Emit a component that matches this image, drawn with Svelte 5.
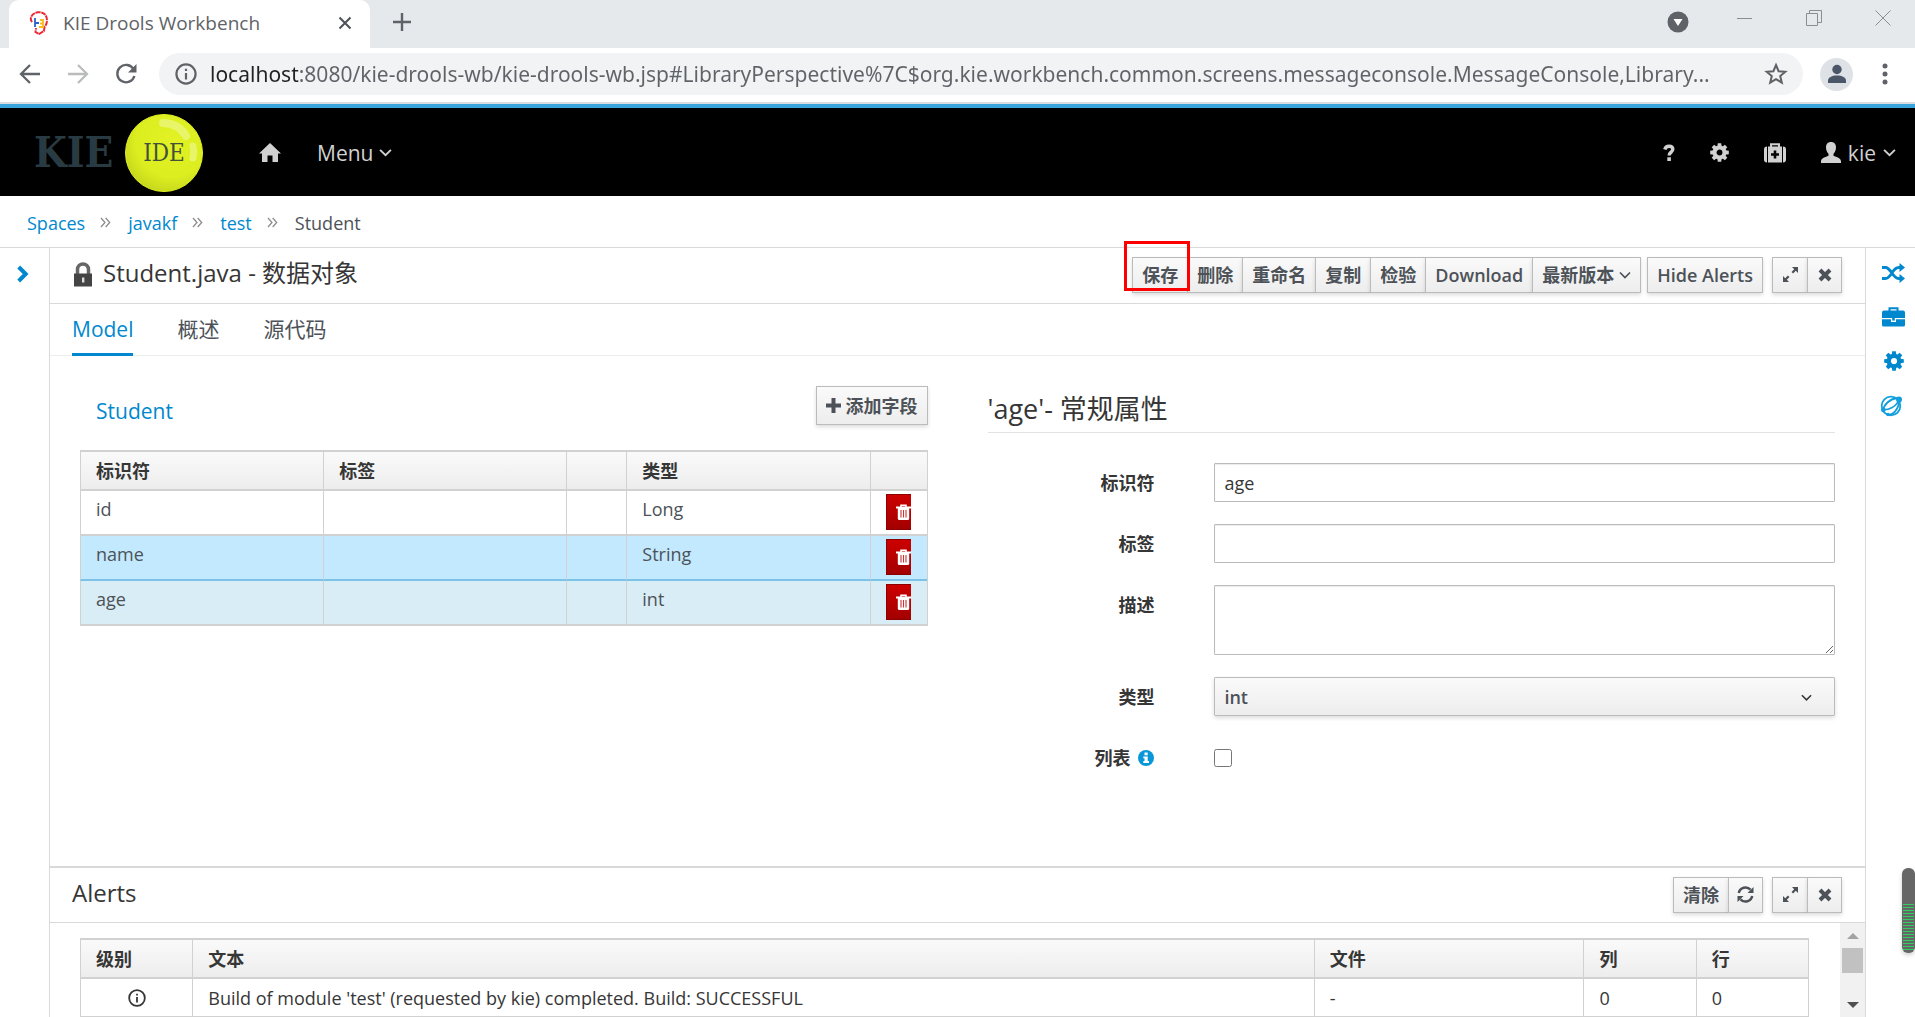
<script>
  const crumbs = ['Spaces', 'javakf', 'test'];
  const fields = [
    { name: 'id', type: 'Long', state: '' },
    { name: 'name', type: 'String', state: 'hovered' },
    { name: 'age', type: 'int', state: 'selected' }
  ];
  const actions = ['删除', '重命名', '复制', '检验', 'Download'];
  const teeth = [0, 45, 90, 135, 180, 225, 270, 315];
  let url = $state(
    'localhost:8080/kie-drools-wb/kie-drools-wb.jsp#LibraryPerspective%7C$org.kie.workbench.common.screens.messageconsole.MessageConsole,Library...'
  );
  let identifier = $state('age');
  let label = $state('');
  let description = $state('');
  let type = $state('int');
  let isList = $state(false);
</script>

{#snippet gear(size)}
  <svg width={size} height={size} viewBox="0 0 20 20" aria-hidden="true">
    {#each teeth as angle}
      <path d="M7.7 4 L8.2 .2 H11.8 L12.3 4Z" transform="rotate({angle} 10 10)" fill="currentColor" />
    {/each}
    <circle cx="10" cy="10" r="5.2" fill="none" stroke="currentColor" stroke-width="4.2" />
  </svg>
{/snippet}

{#snippet chevron(size)}
  <svg width={size} height={size} viewBox="0 0 12 12" aria-hidden="true">
    <path d="M1 3.5 6 8.5 11 3.5" fill="none" stroke="currentColor" stroke-width="1.7" />
  </svg>
{/snippet}

{#snippet cross()}
  <svg width="14" height="14" viewBox="0 0 14 14" aria-hidden="true">
    <path d="M2 2 12 12M12 2 2 12" stroke="currentColor" stroke-width="4" />
  </svg>
{/snippet}

{#snippet expand()}
  <svg width="17" height="17" viewBox="0 0 17 17" aria-hidden="true">
    <path d="M10 1h6v6l-2.2-2.2-2.7 2.7-1.6-1.6 2.7-2.7zM1 10l2.2 2.2 2.7-2.7 1.6 1.6-2.7 2.7L7 16H1z" fill="currentColor" />
  </svg>
{/snippet}

{#snippet infoRing(size)}
  <svg width={size} height={size} viewBox="0 0 20 20" aria-hidden="true">
    <circle cx="10" cy="10" r="8.7" fill="none" stroke="currentColor" stroke-width="2" />
    <path d="M9 9h2v6H9zM9 5.2h2v2.1H9z" fill="currentColor" />
  </svg>
{/snippet}

<div class="window">
  <div class="tabstrip">
    <div class="tab">
      <svg class="favicon" width="20" height="24" viewBox="0 0 20 24" aria-hidden="true">
        <path d="M3 11C0 7 3 2 9 1.3c6-.6 9 3 9 8 0 3-1 5-2.500 6.700L15 20l-5 3-3.500-2L7 17" fill="#fff" stroke="#ee2737" stroke-width="2" stroke-dasharray="5 .7" />
        <path d="M6 7v9M6 12h4" stroke="#2d62c8" stroke-width="1.800" fill="none" />
        <path d="M11 9h3v7h-4M11 12.500h3" stroke="#f9bd19" stroke-width="1.800" fill="none" />
      </svg>
      <span class="tabtitle">KIE Drools Workbench</span>
      <button class="plain" aria-label="Close tab">
        <svg width="14" height="14" viewBox="0 0 14 14"><path d="M1.500 1.500 12.500 12.500M12.500 1.500 1.500 12.500" stroke="#4d5156" stroke-width="2" /></svg>
      </button>
    </div>
    <button class="plain newtab" aria-label="New tab">
      <svg width="18" height="18" viewBox="0 0 18 18"><path d="M9 0V18M0 9H18" stroke="#5f6368" stroke-width="2.400" /></svg>
    </button>
    <div class="wincontrols">
      <button class="plain" aria-label="Search tabs">
        <svg width="22" height="22" viewBox="0 0 22 22"><circle cx="11" cy="11" r="10.500" fill="#5f6368" /><path d="M6.500 8h9L11 15z" fill="#fff" /></svg>
      </button>
      <button class="plain winbtn" aria-label="Minimize"><svg width="16" height="16" viewBox="0 0 16 16"><path d="M0 8.500H15" stroke="#8b8e91" /></svg></button>
      <button class="plain winbtn" aria-label="Restore"><svg width="16" height="16" viewBox="0 0 16 16"><path d="M.5 3.500h11v12H.5zM3.500 3.500V.5h12v12h-4" fill="none" stroke="#8b8e91" /></svg></button>
      <button class="plain winbtn" aria-label="Close"><svg width="16" height="16" viewBox="0 0 16 16"><path d="M.5.5l15 15M15.500.5l-15 15" stroke="#8b8e91" /></svg></button>
    </div>
  </div>

  <div class="toolbar">
    <button class="plain" aria-label="Back"><svg width="22" height="22" viewBox="0 0 22 22"><path d="M21 11H2.500M11 2 2 11l9 9" fill="none" stroke="#5f6368" stroke-width="2.300" /></svg></button>
    <button class="plain" aria-label="Forward"><svg width="22" height="22" viewBox="0 0 22 22"><path d="M1 11h18.500M11 2l9 9-9 9" fill="none" stroke="#babcbe" stroke-width="2.300" /></svg></button>
    <button class="plain" aria-label="Reload"><svg width="22" height="22" viewBox="0 0 22 22"><path d="M18.700 6.500A8.700 8.700 0 1 0 19.400 13" fill="none" stroke="#5f6368" stroke-width="2.400" /><path d="M21.500 1v8.500H13z" fill="#5f6368" /></svg></button>
    <div class="omnibox">
      {@render infoRing(22)}
      <input class="url" aria-label="Address" bind:value={url} />
      <button class="plain" aria-label="Bookmark">
        <svg width="24" height="24" viewBox="0 0 24 24"><path d="M12 3l2.600 6.200 6.700.5-5.100 4.400 1.600 6.500L12 17.100l-5.800 3.500 1.600-6.500-5.100-4.400 6.700-.5z" fill="none" stroke="#5f6368" stroke-width="2" /></svg>
      </button>
    </div>
    <button class="plain avatar" aria-label="Profile">
      <svg width="20" height="20" viewBox="0 0 20 20"><circle cx="10" cy="5.500" r="4.700" fill="#4b5769" /><path d="M1 19v-2.500c0-3 4-5 9-5s9 2 9 5V19z" fill="#4b5769" /></svg>
    </button>
    <button class="plain more" aria-label="Browser menu">
      <svg width="6" height="22" viewBox="0 0 6 22"><g fill="#5f6368"><circle cx="3" cy="3" r="2.500" /><circle cx="3" cy="11" r="2.500" /><circle cx="3" cy="19" r="2.500" /></g></svg>
    </button>
  </div>

  <header class="masthead">
    <a class="logo" href="#home" aria-label="KIE IDE">
      <span class="kie">KIE</span>
      <span class="ball">
        <svg width="80" height="80" viewBox="0 0 80 80" aria-hidden="true">
          <defs>
            <radialGradient id="shine" cx=".6" cy=".35" r=".72">
              <stop offset="0" stop-color="#e2f224" /><stop offset=".65" stop-color="#dcee20" /><stop offset="1" stop-color="#c2d21c" />
            </radialGradient>
          </defs>
          <circle cx="40" cy="40" r="38.500" fill="url(#shine)" stroke="#dff020" />
          <path d="M39 10c10 0 19 5 23 13" fill="none" stroke="#e9f569" stroke-width="8" stroke-linecap="round" />
          <path d="M69 33c1 4 1 8 0 12" fill="none" stroke="#e9f569" stroke-width="7" stroke-linecap="round" />
        </svg>
        <span class="ide">IDE</span>
      </span>
    </a>
    <a class="home" href="#home" aria-label="Home">
      <svg width="22" height="20" viewBox="0 0 22 20"><path d="M11 0 22 10.500h-3V19h-5.500v-6.500h-5V19H3v-8.500H0z" fill="currentColor" /></svg>
    </a>
    <button class="plain menu">Menu {@render chevron(13)}</button>
    <nav class="utilities">
      <button class="plain" aria-label="Help"><svg width="12" height="18" viewBox="0 0 12 18"><path d="M1.800 5.500C2.500 3 4 2.300 6 2.300s3.800 1 3.800 3C9.800 8.300 6.200 8 6.200 11.500" fill="none" stroke="currentColor" stroke-width="3.400" /><path d="M4.300 13.300h3.600v3.700H4.300z" fill="currentColor" /></svg></button>
      <button class="plain" aria-label="Settings">{@render gear(19)}</button>
      <button class="plain" aria-label="Tools">
        <svg width="22" height="20" viewBox="0 0 22 20"><path d="M7 4V1.200h8V4" fill="none" stroke="currentColor" stroke-width="2" /><path d="M3 3.500v16q-3 0-3-3v-10q0-3 3-3zM19 3.500v16q3 0 3-3v-10q0-3-3-3zM4 3.500h14v16H4z" fill="currentColor" /><path d="M11 7.500v8M7 11.500h8" stroke="#000" stroke-width="2.600" /></svg>
      </button>
      <button class="plain user">
        <svg width="20" height="21" viewBox="0 0 20 21" aria-hidden="true"><path d="M10 0c3.300 0 5 2.200 5 5.500 0 3-1.300 5-2.500 6.200v2c3 1.300 7.500 2.300 7.500 5.800V21H0v-1.500c0-3.500 4.500-4.500 7.500-5.800v-2C6.300 10.500 5 8.500 5 5.500 5 2.200 6.700 0 10 0z" fill="currentColor" /></svg>
        <span>kie</span>{@render chevron(13)}
      </button>
    </nav>
  </header>

  <nav class="breadcrumb" aria-label="Breadcrumb">
    {#each crumbs as crumb}
      <a href="#{crumb}">{crumb}</a>
      <svg width="11" height="11" viewBox="0 0 11 11" aria-hidden="true"><path d="M1 1l4 4.500-4 4.500M5.700 1l4 4.500-4 4.500" fill="none" stroke="#8b8d8f" stroke-width="1.300" /></svg>
    {/each}
    <span>Student</span>
  </nav>

  <div class="workspace">
    <aside class="rail">
      <button class="plain" aria-label="Expand project explorer"><svg width="12" height="18" viewBox="0 0 12 18"><path d="M1.700 2 8.700 9l-7 7" fill="none" stroke="currentColor" stroke-width="4" /></svg></button>
    </aside>

    <main class="center">
      <section class="editor">
        <div class="panelhead">
          <svg width="20" height="25" viewBox="0 0 20 25" aria-hidden="true"><path d="M4.500 12V7.500a5.500 5.500 0 0 1 11 0V12" fill="none" stroke="#666" stroke-width="3.500" /><rect x="1" y="11.500" width="18" height="13" fill="#444" /><path d="M9 15.500h2.400v5H9z" fill="#ddd" /></svg>
          <h1>Student.java - 数据对象</h1>
          <div class="buttons">
            <div class="group">
              <span class="marked"><button class="btn">保存</button></span>
              {#each actions as action}
                <button class="btn">{action}</button>
              {/each}
              <button class="btn">最新版本{@render chevron(12)}</button>
            </div>
            <button class="btn alone">Hide Alerts</button>
            <div class="group">
              <button class="btn icon" aria-label="Maximize">{@render expand()}</button>
              <button class="btn icon" aria-label="Close editor">{@render cross()}</button>
            </div>
          </div>
        </div>

        <div class="tabs" role="tablist">
          <button class="plain active" role="tab" aria-selected="true">Model</button>
          <button class="plain" role="tab" aria-selected="false">概述</button>
          <button class="plain" role="tab" aria-selected="false">源代码</button>
        </div>

        <div class="model">
          <div class="fields">
            <div class="fieldhead">
              <a href="#Student">Student</a>
              <button class="btn add">
                <svg width="15" height="15" viewBox="0 0 15 15" aria-hidden="true"><path d="M7.500 0v15M0 7.500h15" stroke="currentColor" stroke-width="4" /></svg>添加字段
              </button>
            </div>
            <table class="grid fieldtable">
              <colgroup><col /><col /><col class="narrow" /><col /><col class="last" /></colgroup>
              <thead><tr><th>标识符</th><th>标签</th><th></th><th>类型</th><th></th></tr></thead>
              <tbody>
                {#each fields as field}
                  <tr class={field.state}>
                    <td>{field.name}</td><td></td><td></td><td>{field.type}</td>
                    <td class="remove">
                      <div class="clip">
                        <button class="danger" aria-label="Delete {field.name}">
                          <svg width="15" height="16" viewBox="0 0 15 16"><path d="M5 3V1.200h5V3" fill="none" stroke="#fff" stroke-width="1.600" /><path d="M0 2.500h15v2H0z" fill="#fff" /><path d="M1.800 4h11.400v10.500q0 1.500-1.500 1.500H3.300q-1.500 0-1.500-1.500z" fill="#fff" /><path d="M5 6v7.500M7.500 6v7.500M10 6v7.500" stroke="#c33" stroke-width="1.100" /></svg>
                        </button>
                      </div>
                    </td>
                  </tr>
                {/each}
              </tbody>
            </table>
          </div>

          <form class="properties">
            <h2>'age'- 常规属性</h2>
            <div class="formgrid">
              <label for="f-id">标识符</label>
              <input id="f-id" type="text" bind:value={identifier} />
              <label for="f-label">标签</label>
              <input id="f-label" type="text" bind:value={label} />
              <label for="f-desc">描述</label>
              <textarea id="f-desc" bind:value={description}></textarea>
              <label for="f-type">类型</label>
              <div class="selectwrap">
                <select id="f-type" bind:value={type}>
                  <option>int</option><option>Long</option><option>String</option>
                </select>
                <span class="caret">{@render chevron(11)}</span>
              </div>
              <label for="f-list" class="withinfo">列表
                <svg width="16" height="16" viewBox="0 0 16 16" aria-hidden="true"><circle cx="8" cy="8" r="8" fill="#0a97da" /><path d="M6.500 2.500h3.200v2.700H6.500zM5.300 6.500h4.400v4.600h1.300V13H5.300v-1.900h1.200V8.300H5.300z" fill="#fff" /></svg>
              </label>
              <input id="f-list" type="checkbox" bind:checked={isList} />
            </div>
          </form>
        </div>
      </section>

      <section class="alerts">
        <div class="panelhead">
          <h1>Alerts</h1>
          <div class="buttons">
            <div class="group">
              <button class="btn">清除</button>
              <button class="btn icon" aria-label="Refresh">
                <svg width="17" height="17" viewBox="0 0 17 17"><path d="M1.800 7A6.800 6.800 0 0 1 13.500 3.700M15.200 10A6.800 6.800 0 0 1 3.500 13.300" fill="none" stroke="currentColor" stroke-width="2.500" /><path d="M16.500 1v6h-6zM.5 16v-6h6z" fill="currentColor" /></svg>
              </button>
            </div>
            <div class="group">
              <button class="btn icon" aria-label="Maximize">{@render expand()}</button>
              <button class="btn icon" aria-label="Close alerts">{@render cross()}</button>
            </div>
          </div>
        </div>
        <div class="alertbody">
          <div class="alertlist">
            <table class="grid alerttable">
              <colgroup><col class="level" /><col /><col class="file" /><col class="level" /><col class="level" /></colgroup>
              <thead><tr><th>级别</th><th>文本</th><th>文件</th><th>列</th><th>行</th></tr></thead>
              <tbody>
                <tr>
                  <td class="mid">{@render infoRing(18)}</td>
                  <td>Build of module 'test' (requested by kie) completed. Build: SUCCESSFUL</td>
                  <td>-</td><td>0</td><td>0</td>
                </tr>
              </tbody>
            </table>
          </div>
          <div class="scrollbar" aria-hidden="true">
            <svg width="12" height="6" viewBox="0 0 12 6"><path d="M0 6 6 0l6 6z" fill="#a3a3a3" /></svg>
            <span class="thumb"></span>
            <svg class="down" width="12" height="6" viewBox="0 0 12 6"><path d="M0 0l6 6 6-6z" fill="#505050" /></svg>
          </div>
        </div>
      </section>
    </main>

    <aside class="rail tools">
      <button class="plain" aria-label="Shuffle">
        <svg width="23" height="20" viewBox="0 0 23 20"><path d="M0 4.500h3.500c5.500 0 7 11 13 11h2M0 15.500h3.500c5.500 0 7-11 13-11h2" fill="none" stroke="currentColor" stroke-width="2.800" /><path d="M17.500 0 23 4.500 17.500 9zM17.500 11l5.500 4.500-5.500 4.500z" fill="currentColor" /></svg>
      </button>
      <button class="plain" aria-label="Toolbox">
        <svg width="23" height="20" viewBox="0 0 23 20"><path d="M7.500 4V1.200h8V4" fill="none" stroke="currentColor" stroke-width="2" /><path d="M2 3.500h19q2 0 2 2V11H0V5.500q0-2 2-2zM0 12.200h9V15h5v-2.800h9V18q0 1.500-1.500 1.500h-20Q0 19.500 0 18z" fill="currentColor" /><path d="M10.200 11h2.600v2.600h-2.600z" fill="currentColor" /></svg>
      </button>
      <button class="plain" aria-label="Preferences">{@render gear(20)}</button>
      <button class="plain globe" aria-label="Services">
        <svg width="22" height="22" viewBox="0 0 22 22"><g fill="none" stroke="#119fdc"><circle cx="11" cy="11" r="9.300" stroke-width="1.800" /><path d="M2.500 14.500C8 15.500 16 12 19 5M3.500 15c0-5 6-11 13.500-12M7 20c6 .5 11-5 12.500-14" stroke-width="1.800" /></g><circle cx="19" cy="4.500" r="3" fill="#119fdc" /><circle cx="3.300" cy="15" r="2.300" fill="#119fdc" /><circle cx="8" cy="19.500" r="1.800" fill="#119fdc" /></svg>
      </button>
    </aside>
  </div>
  <div class="meter" aria-hidden="true"><span></span></div>
</div>

<style>
  :global(body) {
    margin: 0;
    background: #fff;
  }
  .window {
    position: relative;
    display: flex;
    flex-direction: column;
    min-height: 100vh;
    overflow: hidden;
    color: #363636;
    font: 18px/24px "Open Sans", "Noto Sans CJK SC", sans-serif;
  }
  .window :is(*, *::before) {
    box-sizing: border-box;
  }
  svg {
    display: block;
    flex: none;
  }
  a {
    color: #0088ce;
    text-decoration: none;
  }
  button,
  input,
  select,
  textarea {
    margin: 0;
    font: inherit;
    color: inherit;
  }
  .plain {
    padding: 0;
    border: 0;
    background: none;
  }
  h1,
  h2 {
    margin: 0;
    font-weight: 400;
  }

  /* Browser chrome */
  .tabstrip {
    display: flex;
    align-items: center;
    height: 48px;
    padding: 0 24px 4px 9px;
    background: #e5e9ec;
  }
  .tab {
    display: flex;
    align-items: center;
    align-self: flex-start;
    width: 361px;
    height: 48px;
    padding: 0 18px 3px 20px;
    border-radius: 10px 10px 0 0;
    background: #fff;
  }
  .tabtitle {
    flex: 1;
    padding-left: 14px;
    color: #5f6368;
    font-size: 19px;
  }
  .newtab {
    margin-left: 23px;
  }
  .wincontrols {
    display: flex;
    align-items: center;
    gap: 53px;
    margin-left: auto;
  }
  .winbtn {
    padding-bottom: 8px;
  }
  .wincontrols .plain:first-child {
    margin-right: -5px;
  }
  .toolbar {
    display: flex;
    align-items: center;
    gap: 26px;
    height: 56px;
    padding: 0 27px 2px 19px;
    border-bottom: 2px solid #dadce0;
  }
  .omnibox {
    display: flex;
    flex: 1;
    align-items: center;
    gap: 13px;
    height: 42px;
    margin: 0 -9px 0 -4px;
    padding: 0 15px 0 16px;
    border-radius: 21px;
    background: #f1f3f4;
    color: #5f6368;
  }
  .url {
    flex: 1;
    min-width: 0;
    padding: 0;
    border: 0;
    outline: 0;
    background: linear-gradient(90deg, #202124 88px, #5f6368 88px);
    background-clip: text;
    -webkit-background-clip: text;
    color: transparent;
    font-family: "Noto Sans", "Open Sans", sans-serif;
    font-size: 21px;
    line-height: 32px;
  }
  .avatar {
    display: grid;
    place-items: center;
    width: 33px;
    height: 33px;
    margin-right: 3px;
    border-radius: 50%;
    background: #dee1e6;
  }

  /* Masthead */
  .masthead {
    display: flex;
    align-items: center;
    height: 92px;
    padding: 1px 19px 0 34px;
    border-top: 4px solid #39a5dc;
    background: #000;
    color: #d1d1d1;
    font-size: 21px;
  }
  .logo {
    display: flex;
    align-items: center;
    gap: 9px;
    font-family: "DejaVu Serif Condensed", "DejaVu Serif", serif;
  }
  .kie {
    width: 81px;
    color: #293b42;
    font-size: 42px;
    font-weight: 700;
    line-height: 48px;
  }
  .ball {
    display: grid;
    place-items: center;
  }
  .ball > * {
    grid-area: 1 / 1;
  }
  .ide {
    color: #43503a;
    font-size: 24px;
  }
  .home {
    margin: 0 36px 0 55px;
    color: inherit;
  }
  .menu {
    display: flex;
    align-items: center;
    gap: 6px;
  }
  .utilities {
    display: flex;
    align-items: center;
    gap: 35px;
    margin-left: auto;
  }
  .user {
    display: flex;
    align-items: center;
    gap: 7px;
  }
  .breadcrumb {
    display: flex;
    align-items: center;
    height: 52px;
    padding: 2px 27px 0;
    border-bottom: 1px solid #d9d9d9;
  }
  .breadcrumb svg {
    margin: 0 17px 0 15px;
  }
  .breadcrumb span {
    color: #4d5258;
  }

  /* Workspace */
  .workspace {
    display: flex;
    flex: 1;
  }
  .rail {
    flex: none;
    width: 50px;
    padding: 16px 17px;
    border-right: 1px solid #d9d9d9;
    color: #0088ce;
  }
  .rail.tools {
    display: flex;
    flex-direction: column;
    align-items: center;
    gap: 24px;
    padding: 15px 0 0 6px;
    border: 0;
    border-left: 1px solid #d9d9d9;
  }
  .globe {
    padding-right: 6px;
  }
  .center {
    display: flex;
    flex: 1;
    flex-direction: column;
    min-width: 0;
  }
  .editor {
    flex: 1;
  }
  .panelhead {
    display: flex;
    align-items: center;
    height: 56px;
    padding: 0 23px 2px 22px;
    border-bottom: 1px solid #d9d9d9;
  }
  .panelhead h1 {
    padding: 0 0 3px 9px;
    font-size: 24px;
    line-height: 32px;
  }
  .panelhead > svg {
    margin: 0 1px;
  }
  .buttons {
    display: flex;
    gap: 9px;
    margin-left: auto;
  }
  .group {
    display: flex;
  }
  .group .btn:not(:last-child),
  .marked .btn {
    border-right-width: 0;
  }
  .alone {
    margin-left: -3px;
  }
  .btn {
    display: flex;
    align-items: center;
    justify-content: center;
    gap: 5px;
    height: 36px;
    padding: 0 9px;
    border: 1px solid #bbb;
    background: linear-gradient(#fafafa, #ededed);
    box-shadow: 0 2px 4px rgb(3 3 3 / 14%);
    color: #4d5258;
    font-weight: 600;
    white-space: nowrap;
  }
  .icon {
    width: 35px;
    padding: 0;
  }
  .marked {
    position: relative;
  }
  .marked::before {
    content: "";
    position: absolute;
    z-index: 1;
    inset: -16px -3px 2px -8px;
    border: 3px solid #f00;
    pointer-events: none;
  }
  .tabs {
    display: flex;
    gap: 44px;
    height: 52px;
    padding: 0 22px;
    border-bottom: 1px solid #ededed;
  }
  .tabs button {
    height: 52px;
    padding-bottom: 3px;
    color: #4d5258;
    font-size: 21px;
  }
  .tabs .active {
    padding-bottom: 0;
    border-bottom: 3px solid #0088ce;
    color: #0088ce;
  }
  .model {
    display: grid;
    grid-template-columns: 1fr 1fr;
    gap: 60px;
    padding: 30px 30px 60px;
  }
  .fieldhead {
    display: flex;
    align-items: center;
    justify-content: space-between;
    margin-bottom: 25px;
    padding-left: 16px;
    font-size: 21px;
  }
  .fieldhead a {
    padding-top: 10px;
  }
  .add {
    height: 39px;
    font-size: 18px;
  }
  .grid {
    width: 100%;
    table-layout: fixed;
    border-spacing: 0;
    border-top: 2px solid #d1d1d1;
    border-right: 1px solid #d1d1d1;
  }
  .grid th,
  .grid td {
    padding: 0 15px;
    border-bottom: 2px solid #d1d1d1;
    border-left: 1px solid #d1d1d1;
    text-align: left;
    white-space: nowrap;
  }
  .grid th {
    height: 39px;
    background: linear-gradient(#fafafa, #ededed);
    font-weight: 700;
  }
  .narrow {
    width: 60px;
  }
  .last {
    width: 57px;
  }
  .fieldtable td {
    height: 45px;
    padding-bottom: 8px;
    color: #4d5258;
  }
  .fieldtable .remove {
    padding: 0 15px 2px;
  }
  .hovered td {
    border-bottom-color: #7cc1e6;
    background: #c3e9ff;
  }
  .selected td {
    background: #d9edf6;
  }
  .clip {
    width: 25px;
    height: 36px;
    overflow: hidden;
  }
  .danger {
    display: grid;
    place-items: center;
    width: 36px;
    height: 36px;
    padding: 0;
    border: 1px solid #8b0000;
    background: linear-gradient(#c00, #a30000);
  }
  .properties h2 {
    padding: 5px 0;
    border-bottom: 1px solid #e3e3e3;
    font-size: 27px;
    line-height: 36px;
  }
  .formgrid {
    display: grid;
    grid-template-columns: 167fr 621fr;
    gap: 22px 60px;
    padding-top: 30px;
  }
  .formgrid label {
    padding-top: 8px;
    font-weight: 700;
    text-align: right;
  }
  .formgrid input[type="text"],
  .formgrid textarea,
  .formgrid select {
    width: 100%;
    height: 39px;
    padding: 0 9px;
    border: 1px solid #bbb;
    border-radius: 1px;
    outline: 0;
    background: #fff;
    box-shadow: inset 0 1px 1px rgb(3 3 3 / 8%);
  }
  .formgrid textarea {
    display: block;
    height: 70px;
  }
  .formgrid select {
    appearance: none;
    background: linear-gradient(#fafafa, #ededed);
    box-shadow: 0 2px 4px rgb(3 3 3 / 14%);
    color: #4d5258;
    font-weight: 600;
  }
  .selectwrap {
    position: relative;
  }
  .caret {
    position: absolute;
    top: 15px;
    right: 23px;
    pointer-events: none;
  }
  .formgrid .withinfo {
    display: flex;
    align-items: center;
    justify-content: flex-end;
    gap: 8px;
  }
  .formgrid input[type="checkbox"] {
    width: 18px;
    height: 18px;
    margin-top: 11px;
  }

  /* Alerts */
  .alerts {
    border-top: 2px solid #d9d9d9;
  }
  .alerts .panelhead {
    height: 55px;
    padding-left: 13px;
    padding-bottom: 1px;
  }
  .alertbody {
    display: flex;
  }
  .alertlist {
    flex: 1;
    min-width: 0;
    padding: 15px 31px 0 30px;
  }
  .level {
    width: 6.5%;
  }
  .file {
    width: 15.6%;
  }
  .alerttable td {
    height: 38px;
    border-bottom-width: 1px;
  }
  .alerttable .mid svg {
    margin: 0 auto;
  }
  .scrollbar {
    display: flex;
    flex-direction: column;
    align-items: center;
    width: 25px;
    padding: 10px 0 9px;
    background: #f1f1f1;
  }
  .thumb {
    width: 21px;
    height: 25px;
    margin-top: 9px;
    background: #c1c1c1;
  }
  .down {
    margin-top: auto;
  }
  .meter {
    position: absolute;
    right: 0;
    bottom: 64px;
    width: 13px;
    height: 85px;
    padding: 36px 1px 3px;
    border-radius: 6px;
    background: #666;
    box-shadow: 0 2px 4px rgb(0 0 0 / 20%);
  }
  .meter span {
    display: block;
    height: 100%;
    background: repeating-linear-gradient(#2fd060 0 1px, #666 1px 3px);
  }
</style>
